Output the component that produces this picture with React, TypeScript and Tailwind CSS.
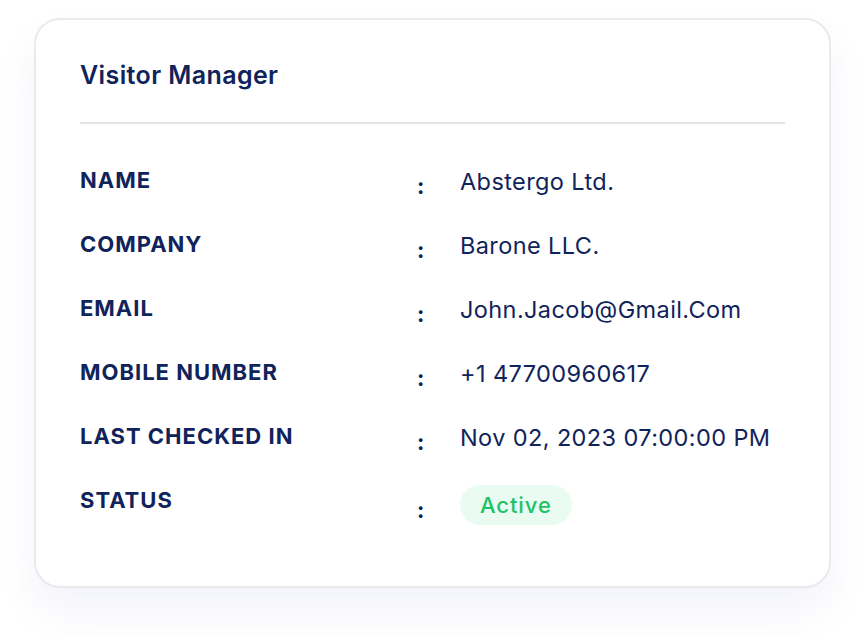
const rows = [
  { label: "NAME", value: "Abstergo Ltd." },
  { label: "COMPANY", value: "Barone LLC." },
  { label: "EMAIL", value: "John.Jacob@Gmail.Com" },
  { label: "MOBILE NUMBER", value: "+1 47700960617" },
  { label: "LAST CHECKED IN", value: "Nov 02, 2023 07:00:00 PM" },
];

export default function App() {
  return (
    <div className="min-h-[637px] w-[864px] bg-white pt-[18px] pl-[34px] font-['Inter',sans-serif] text-[#10235a]">
      {/* Card */}
      <div className="h-[570px] w-[797px] rounded-[26px] border-2 border-[#e9e9ef] bg-white px-[44px] pt-[39px] shadow-[0_22px_40px_rgba(80,96,200,0.07)]">
        <h2 className="text-[25px] leading-[32px] font-semibold tracking-[0.4px]">Visitor Manager</h2>
        <div className="mt-[31px] h-[2px] bg-[#e4e4e8]" />

        <div className="mt-[42px]">
          {rows.map((r) => (
            <div key={r.label} className="grid h-[64px] grid-cols-[337px_43px_1fr] items-start">
              <div className="text-[22px] leading-[28px] font-bold tracking-[1px]">{r.label}</div>
              <div className="mt-[6px] text-[22px] leading-[28px] font-bold">:</div>
              <div className="mt-[2px] text-[23.5px] leading-[28px] font-normal tracking-[0.4px]">{r.value}</div>
            </div>
          ))}
          <div className="grid grid-cols-[337px_43px_1fr] items-start">
            <div className="text-[22px] leading-[28px] font-bold tracking-[1px]">STATUS</div>
            <div className="mt-[10px] text-[22px] leading-[28px] font-bold">:</div>
            <div>
              <span className="-mt-[1px] inline-flex h-[40px] items-center rounded-full bg-[#eafbf1] px-[20px] text-[22px] font-medium tracking-[0.9px] text-[#1ec267]">
                Active
              </span>
            </div>
          </div>
        </div>
      </div>
    </div>
  );
}
